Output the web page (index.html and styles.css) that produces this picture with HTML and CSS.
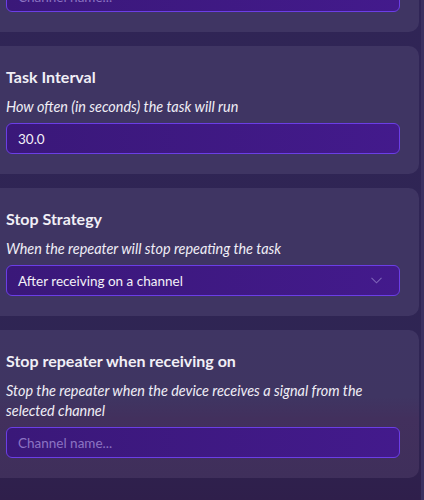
FILE: index.html
```html
<!DOCTYPE html>
<html>
<head>
<meta charset="utf-8">
<link rel="stylesheet" href="styles.css">
</head>
<body>
<div class="page">
  <div class="list">
    <section class="card card-first">
      <div class="field"><span class="placeholder">Channel name...</span></div>
    </section>
    <section class="card">
      <h2 class="title">Task Interval</h2>
      <p class="desc">How often (in seconds) the task will run</p>
      <div class="field"><span class="value">30.0</span></div>
    </section>
    <section class="card">
      <h2 class="title">Stop Strategy</h2>
      <p class="desc">When the repeater will stop repeating the task</p>
      <div class="field select"><span class="value">After receiving on a channel</span>
        <svg class="chev" width="11" height="7" viewBox="0 0 11 7"><path d="M0.5 0.8 L5.5 5.8 L10.5 0.8" fill="none" stroke="#7d63b8" stroke-width="1.1"/></svg>
      </div>
    </section>
    <section class="card card-last">
      <h2 class="title">Stop repeater when receiving on</h2>
      <p class="desc">Stop the repeater when the device receives a signal from the selected channel</p>
      <div class="field"><span class="placeholder">Channel name...</span></div>
    </section>
  </div>
  <div class="edge"></div>
</div>
</body>
</html>
```
FILE: styles.css
```css
html, body {
  margin: 0;
  padding: 0;
}
body {
  width: 424px;
  height: 500px;
  overflow: hidden;
  background: linear-gradient(180deg, #302556 0%, #2f2553 80%, #2f1f4b 100%);
  font-family: Lato, "Noto Sans", sans-serif;
}
.page {
  display: flex;
  height: 500px;
}
.list {
  flex: 1;
  display: flex;
  flex-direction: column;
  gap: 14px;
  margin-left: -10px;
  margin-right: 2px;
}
.edge {
  width: 3px;
  background: #3a3060;
}
.card {
  background: #3f3563;
  border-radius: 10px;
  padding: 21px 19px 20px 16px;
}
.card-first {
  margin-top: -38px;
  padding-top: 19px;
}
.card-last {
  background: linear-gradient(180deg, #3f3563 0%, #3f3562 45%, #42305d 60%, #3f2f5b 100%);
}
.title {
  margin: 0;
  font-size: 16px;
  line-height: 20px;
  font-weight: 700;
  color: #f1eff6;
}
.desc {
  margin: 10px 0 6px;
  font-size: 14.4px;
  line-height: 20px;
  font-style: italic;
  color: #f0eef6;
}
.field {
  height: 29px;
  border: 1px solid #6b3ee6;
  border-radius: 6px;
  background: linear-gradient(90deg, #3a1879, #431a8c);
  display: flex;
  align-items: center;
  padding: 0 11px;
  font-size: 13.5px;
}
.value {
  color: #f3f1f8;
}
.placeholder {
  color: #8c74c3;
}
.select {
  justify-content: space-between;
}
.chev {
  margin-right: 6px;
}
```
